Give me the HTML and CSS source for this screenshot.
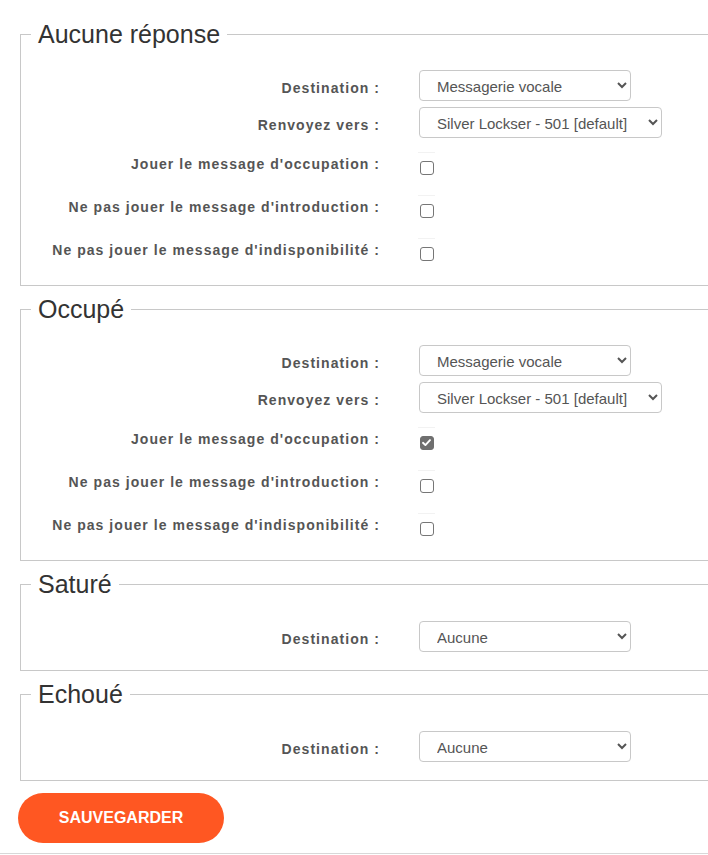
FILE: index.html
```html
<!DOCTYPE html>
<html lang="fr">
<head>
<meta charset="utf-8">
<title>Renvois</title>
<link rel="stylesheet" href="styles.css">
</head>
<body>
<div class="page">
  <fieldset class="group">
    <legend>Aucune réponse</legend>
    <div class="rows">
      <label class="lbl sel-row">Destination :</label>
      <div class="ctl sel-row"><select class="sel"><option>Messagerie vocale</option></select></div>
      <label class="lbl sel-row">Renvoyez vers :</label>
      <div class="ctl sel-row"><select class="sel"><option>Silver Lockser - 501 [default]</option></select></div>
      <label class="lbl chk-row">Jouer le message d'occupation :</label>
      <div class="ctl chk-row"><span class="chkwrap"><input class="chk" type="checkbox"></span></div>
      <label class="lbl chk-row">Ne pas jouer le message d'introduction :</label>
      <div class="ctl chk-row"><span class="chkwrap"><input class="chk" type="checkbox"></span></div>
      <label class="lbl chk-row">Ne pas jouer le message d'indisponibilité :</label>
      <div class="ctl chk-row"><span class="chkwrap"><input class="chk" type="checkbox"></span></div>
    </div>
  </fieldset>

  <fieldset class="group">
    <legend>Occupé</legend>
    <div class="rows">
      <label class="lbl sel-row">Destination :</label>
      <div class="ctl sel-row"><select class="sel"><option>Messagerie vocale</option></select></div>
      <label class="lbl sel-row">Renvoyez vers :</label>
      <div class="ctl sel-row"><select class="sel"><option>Silver Lockser - 501 [default]</option></select></div>
      <label class="lbl chk-row">Jouer le message d'occupation :</label>
      <div class="ctl chk-row"><span class="chkwrap"><input class="chk" type="checkbox" checked><svg class="tick" width="13" height="13" viewBox="0 0 13 13"><path d="M3 6.8 L5.4 9.1 L10 4.1" fill="none" stroke="#fff" stroke-width="1.9" stroke-linecap="round" stroke-linejoin="round"/></svg></span></div>
      <label class="lbl chk-row">Ne pas jouer le message d'introduction :</label>
      <div class="ctl chk-row"><span class="chkwrap"><input class="chk" type="checkbox"></span></div>
      <label class="lbl chk-row">Ne pas jouer le message d'indisponibilité :</label>
      <div class="ctl chk-row"><span class="chkwrap"><input class="chk" type="checkbox"></span></div>
    </div>
  </fieldset>

  <fieldset class="group small">
    <legend>Saturé</legend>
    <div class="rows">
      <label class="lbl sel-row">Destination :</label>
      <div class="ctl sel-row"><select class="sel"><option>Aucune</option></select></div>
    </div>
  </fieldset>

  <fieldset class="group small">
    <legend>Echoué</legend>
    <div class="rows">
      <label class="lbl sel-row">Destination :</label>
      <div class="ctl sel-row"><select class="sel"><option>Aucune</option></select></div>
    </div>
  </fieldset>

  <div class="actions">
    <button class="save" type="button">SAUVEGARDER</button>
  </div>
</div>
<div class="footer-line"></div>
</body>
</html>
```

FILE: styles.css
```css
html, body {
  margin: 0;
  padding: 0;
  background: #fff;
  overflow: hidden;
}
body {
  font-family: "Liberation Sans", Arial, sans-serif;
  color: #333;
  width: 708px;
}
.page {
  padding: 20px 0 0 20px;
  width: 730px;
}
.group {
  margin: 0 0 9px 0;
  padding: 0 0 12px 10px;
  border: 1px solid #c8c8c8;
  border-right: none;
  min-width: 0;
  width: 720px;
  box-sizing: border-box;
}
.group.small {
  padding-bottom: 12px;
}
.group legend {
  font-size: 25px;
  line-height: 28px;
  height: 28px;
  padding: 0 7px;
  color: #333;
  font-weight: normal;
}
.rows {
  display: grid;
  grid-template-columns: 349px auto;
  column-gap: 39px;
  justify-items: start;
  padding-top: 22px;
}
.small .rows {
  padding-top: 23px;
}
.lbl {
  justify-self: end;
  font-size: 14px;
  font-weight: bold;
  color: #555;
  letter-spacing: 1.05px;
  display: flex;
  align-items: center;
}
.sel-row {
  height: 31px;
  margin-bottom: 6px;
}
.lbl.sel-row {
  padding-top: 4px;
  box-sizing: border-box;
}
.chk-row {
  height: 43px;
}
.lbl.chk-row {
  align-items: flex-start;
  padding-top: 12px;
  box-sizing: border-box;
}
.ctl {
  display: flex;
  align-items: center;
}
.ctl.chk-row {
  align-items: flex-start;
}
.sel {
  height: 31px;
  min-width: 212px;
  box-sizing: border-box;
  border: 1px solid #c8c8c8;
  border-radius: 4px;
  background: #fff;
  font-family: "Liberation Sans", Arial, sans-serif;
  font-size: 15px;
  color: #555;
  padding: 2px 17px 0 13px;
}
.chkwrap {
  position: relative;
  display: flex;
  align-items: center;
  justify-content: center;
  width: 17px;
  height: 30px;
  margin-top: 8px;
  margin-left: -1px;
  border-top: 1px solid #f2f2f2;
  box-sizing: border-box;
}
.chk {
  appearance: none;
  -webkit-appearance: none;
  margin: 0;
  width: 14px;
  height: 14px;
  border: 1px solid #767676;
  border-radius: 3px;
  background: #fff;
  box-sizing: border-box;
}
.chk:checked {
  background: #6f6f6f;
  border-color: #6f6f6f;
}
.tick {
  position: absolute;
  left: 2px;
  top: 8px;
  pointer-events: none;
}
.actions {
  display: flex;
  margin-left: -2px;
  margin-top: 12px;
  padding-bottom: 10px;
}
.save {
  width: 206px;
  height: 50px;
  border: none;
  border-radius: 25px;
  background: #ff5722;
  color: #fff;
  font-family: "Liberation Sans", Arial, sans-serif;
  font-weight: bold;
  font-size: 16px;
}
.footer-line {
  height: 1px;
  background: #d8d8d8;
  width: 100%;
}
```
